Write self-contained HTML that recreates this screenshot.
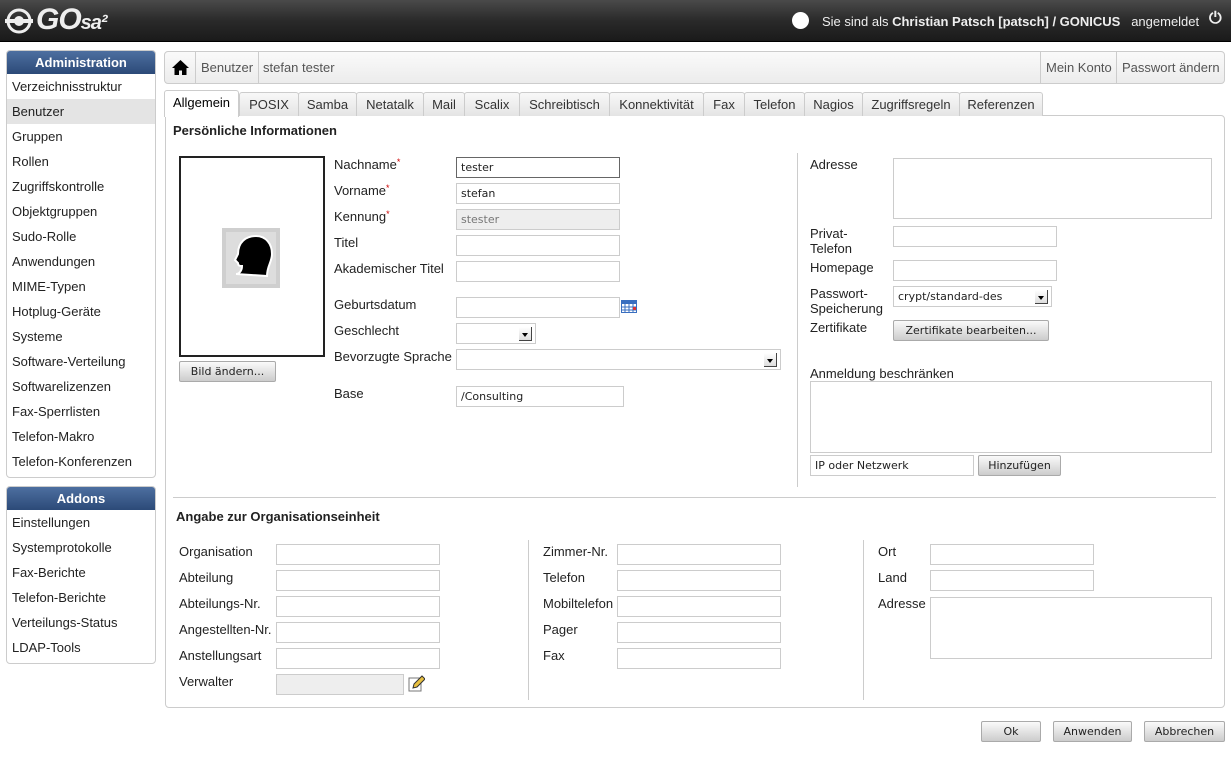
<!DOCTYPE html>
<html><head><meta charset="utf-8"><style>
*{box-sizing:border-box}
body{margin:0;width:1231px;height:765px;position:relative;font-family:"Liberation Sans",sans-serif;font-size:13px;color:#222;background:#fff;overflow:hidden}
.a{position:absolute}
.top{left:0;top:0;width:1231px;height:42px;background:linear-gradient(#4a4a4a,#2a2a2a 50%,#1a1a1a);border-bottom:1px solid #000}
.side{left:6px;width:150px;border:1px solid #ccc;border-radius:4px;background:#fff;overflow:hidden}
.side .h{height:23px;background:linear-gradient(#4d6fa0,#2c4a78);color:#fff;font-weight:bold;text-align:center;line-height:23px}
.side .i{height:25px;line-height:25px;padding-left:5px}
.in{position:absolute;height:21px;border:1px solid #ccc;background:#fff;font-family:"DejaVu Sans",sans-serif;font-size:11px;line-height:19px;padding-left:4px}
.btn{position:absolute;height:21px;border:1px solid #aaa;border-radius:2px;background:linear-gradient(#fafafa,#ccc);font-family:"DejaVu Sans",sans-serif;font-size:11px;text-align:center;line-height:19px}
.sel:after{content:"";position:absolute;right:3px;top:3px;width:12px;height:13px;background:linear-gradient(#fff,#ddd);border-right:1px solid #444;border-bottom:1px solid #444}
.sel:before{content:"";position:absolute;right:7px;top:9px;border:3px solid transparent;border-top:4px solid #000;z-index:2}
.tab{position:absolute;top:92px;height:24px;border:1px solid #ccc;border-bottom:none;border-radius:3px 3px 0 0;background:linear-gradient(#f8f8f8,#e4e4e4);text-align:center;line-height:24px;color:#333}
.l{position:absolute}
.r{color:#c00;font-size:9px;vertical-align:top}
</style></head><body>
<div class="a top">
 <svg class="a" style="left:4px;top:8px" width="30" height="26" viewBox="0 0 30 26"><circle cx="15" cy="13" r="11" fill="none" stroke="#eee" stroke-width="3"/><circle cx="15" cy="13" r="5" fill="#eee"/><rect x="1" y="11" width="28" height="4" fill="#eee"/></svg>
 <div class="a" style="left:36px;top:3px;color:#eee;font-weight:bold;font-style:italic;font-size:30px;letter-spacing:-1px">GO<span style="font-size:20px">sa²</span></div>
 <div class="a" style="left:792px;top:12px;width:17px;height:17px;border-radius:50%;background:#fff"></div>
 <div class="a" style="left:822px;top:14px;color:#eee;font-size:13px">Sie sind als <b>Christian Patsch [patsch] / GONICUS</b> &nbsp; angemeldet</div>
 <div class="a" style="left:1209px;top:10px;color:#eee;font-weight:bold;font-size:16px">⏻</div>
</div>
<div class="a side" style="top:50px;height:428px">
 <div class="h">Administration</div>
 <div class="i">Verzeichnisstruktur</div><div class="i" style="background:#e4e4e4">Benutzer</div><div class="i">Gruppen</div><div class="i">Rollen</div><div class="i">Zugriffskontrolle</div><div class="i">Objektgruppen</div><div class="i">Sudo-Rolle</div><div class="i">Anwendungen</div><div class="i">MIME-Typen</div><div class="i">Hotplug-Geräte</div><div class="i">Systeme</div><div class="i">Software-Verteilung</div><div class="i">Softwarelizenzen</div><div class="i">Fax-Sperrlisten</div><div class="i">Telefon-Makro</div><div class="i">Telefon-Konferenzen</div>
</div>
<div class="a side" style="top:486px;height:178px">
 <div class="h">Addons</div>
 <div class="i">Einstellungen</div><div class="i">Systemprotokolle</div><div class="i">Fax-Berichte</div><div class="i">Telefon-Berichte</div><div class="i">Verteilungs-Status</div><div class="i">LDAP-Tools</div>
</div>
<div class="a" style="left:164px;top:51px;width:1061px;height:33px;border:1px solid #ccc;border-radius:4px;background:linear-gradient(#fafafa,#ececec);color:#555;line-height:31px">
 <svg class="a" style="left:7px;top:8px" width="17" height="15" viewBox="0 0 17 15"><path d="M8.5 0L0 8h2.5v7h4.5v-4.5h3V15h4.5V8H17z" fill="#000"/></svg>
 <div class="a" style="left:30px;top:0;height:31px;border-left:1px solid #ccc;padding-left:5px">Benutzer</div>
 <div class="a" style="left:93px;top:0;height:31px;border-left:1px solid #ccc;padding-left:4px">stefan tester</div>
 <div class="a" style="left:875px;top:0;height:31px;border-left:1px solid #ccc;padding-left:5px">Mein Konto</div>
 <div class="a" style="left:951px;top:0;height:31px;border-left:1px solid #ccc;padding-left:5px">Passwort ändern</div>
</div>
<div class="a" style="left:165px;top:115px;width:1060px;height:593px;border:1px solid #ccc;border-radius:0 4px 4px 4px"></div>
<div class="tab" style="left:239px;width:60px">POSIX</div><div class="tab" style="left:298px;width:59px">Samba</div><div class="tab" style="left:356px;width:68px">Netatalk</div><div class="tab" style="left:423px;width:42px">Mail</div><div class="tab" style="left:464px;width:56px">Scalix</div><div class="tab" style="left:519px;width:91px">Schreibtisch</div><div class="tab" style="left:609px;width:95px">Konnektivität</div><div class="tab" style="left:703px;width:42px">Fax</div><div class="tab" style="left:744px;width:61px">Telefon</div><div class="tab" style="left:804px;width:59px">Nagios</div><div class="tab" style="left:862px;width:98px">Zugriffsregeln</div><div class="tab" style="left:959px;width:84px">Referenzen</div>
<div class="tab" style="left:164px;top:90px;width:75px;height:27px;background:#fff;color:#000">Allgemein</div>
<div class="l" style="left:173px;top:123px;font-weight:bold">Persönliche Informationen</div>
<div class="a" style="left:179px;top:156px;width:146px;height:201px;border:2px solid #222"></div>
<svg class="a" style="left:220px;top:226px" width="62" height="64" viewBox="0 0 62 64"><rect x="2" y="2" width="58" height="60" fill="#bbb" opacity=".7"/><rect x="6" y="6" width="50" height="52" fill="#ddd"/><path d="M16 48c3 0 6-3 6-8-2 0-4 0-4-3l-3-3 3-6c0-12 8-18 18-18 10 0 16 8 16 18 0 8-5 12-5 22z" fill="#000" stroke="#fff" stroke-width="2"/></svg>
<div class="btn" style="left:179px;top:361px;width:97px">Bild ändern...</div>
<div class="l" style="left:334px;top:157px">Nachname<span class="r">*</span></div>
<div class="l" style="left:334px;top:183px">Vorname<span class="r">*</span></div>
<div class="l" style="left:334px;top:209px">Kennung<span class="r">*</span></div>
<div class="l" style="left:334px;top:235px">Titel</div>
<div class="l" style="left:334px;top:261px">Akademischer Titel</div>
<div class="l" style="left:334px;top:297px">Geburtsdatum</div>
<div class="l" style="left:334px;top:323px">Geschlecht</div>
<div class="l" style="left:334px;top:349px">Bevorzugte Sprache</div>
<div class="l" style="left:334px;top:386px">Base</div>
<div class="in" style="left:456px;top:157px;width:164px;border-color:#666">tester</div>
<div class="in" style="left:456px;top:183px;width:164px">stefan</div>
<div class="in" style="left:456px;top:209px;width:164px;background:#eee;color:#777">stester</div>
<div class="in" style="left:456px;top:235px;width:164px"></div>
<div class="in" style="left:456px;top:261px;width:164px"></div>
<div class="in" style="left:456px;top:297px;width:164px"></div>
<svg class="a" style="left:621px;top:300px" width="16" height="13"><rect x=".5" y=".5" width="15" height="12" fill="#fff" stroke="#3a6fc0"/><rect x="1" y="1" width="14" height="3" fill="#3a6fc0"/><path d="M1 7h14M1 10h14M4 4v9M8 4v9M12 4v9" stroke="#3a6fc0"/><rect x="12" y="7" width="3" height="3" fill="#d33"/></svg>
<div class="in sel" style="left:456px;top:323px;width:80px"></div>
<div class="in sel" style="left:456px;top:349px;width:325px"></div>
<div class="in" style="left:456px;top:386px;width:168px">/Consulting</div>
<div class="a" style="left:797px;top:153px;width:1px;height:334px;background:#ccc"></div>
<div class="l" style="left:810px;top:157px">Adresse</div>
<div class="in" style="left:893px;top:158px;width:319px;height:61px"></div>
<div class="l" style="left:810px;top:226px;line-height:15px">Privat-<br>Telefon</div>
<div class="in" style="left:893px;top:226px;width:164px"></div>
<div class="l" style="left:810px;top:260px">Homepage</div>
<div class="in" style="left:893px;top:260px;width:164px"></div>
<div class="l" style="left:810px;top:286px;line-height:15px">Passwort-<br>Speicherung</div>
<div class="in sel" style="left:893px;top:286px;width:159px">crypt/standard-des</div>
<div class="l" style="left:810px;top:320px">Zertifikate</div>
<div class="btn" style="left:893px;top:320px;width:156px">Zertifikate bearbeiten...</div>
<div class="l" style="left:810px;top:366px">Anmeldung beschränken</div>
<div class="in" style="left:810px;top:381px;width:402px;height:72px"></div>
<div class="in" style="left:810px;top:455px;width:164px">IP oder Netzwerk</div>
<div class="btn" style="left:978px;top:455px;width:83px">Hinzufügen</div>
<div class="a" style="left:173px;top:497px;width:1043px;height:1px;background:#ccc"></div>
<div class="l" style="left:176px;top:509px;font-weight:bold">Angabe zur Organisationseinheit</div>
<div class="l" style="left:179px;top:544px">Organisation</div><div class="l" style="left:179px;top:570px">Abteilung</div><div class="l" style="left:179px;top:596px">Abteilungs-Nr.</div><div class="l" style="left:179px;top:622px">Angestellten-Nr.</div><div class="l" style="left:179px;top:648px">Anstellungsart</div><div class="l" style="left:179px;top:674px">Verwalter</div>
<div class="in" style="left:276px;top:544px;width:164px"></div><div class="in" style="left:276px;top:570px;width:164px"></div><div class="in" style="left:276px;top:596px;width:164px"></div><div class="in" style="left:276px;top:622px;width:164px"></div><div class="in" style="left:276px;top:648px;width:164px"></div><div class="in" style="left:276px;top:674px;width:128px;background:#eee"></div>
<svg class="a" style="left:408px;top:675px" width="17" height="17"><rect x="1" y="3" width="12" height="13" fill="#fff" stroke="#777"/><path d="M5 13l1-4 8-8 3 3-8 8z" fill="#e8c040" stroke="#333"/></svg>
<div class="a" style="left:528px;top:540px;width:1px;height:160px;background:#ccc"></div>
<div class="l" style="left:543px;top:544px">Zimmer-Nr.</div><div class="l" style="left:543px;top:570px">Telefon</div><div class="l" style="left:543px;top:596px">Mobiltelefon</div><div class="l" style="left:543px;top:622px">Pager</div><div class="l" style="left:543px;top:648px">Fax</div>
<div class="in" style="left:617px;top:544px;width:164px"></div><div class="in" style="left:617px;top:570px;width:164px"></div><div class="in" style="left:617px;top:596px;width:164px"></div><div class="in" style="left:617px;top:622px;width:164px"></div><div class="in" style="left:617px;top:648px;width:164px"></div>
<div class="a" style="left:863px;top:540px;width:1px;height:160px;background:#ccc"></div>
<div class="l" style="left:878px;top:544px">Ort</div><div class="l" style="left:878px;top:570px">Land</div><div class="l" style="left:878px;top:596px">Adresse</div>
<div class="in" style="left:930px;top:544px;width:164px"></div><div class="in" style="left:930px;top:570px;width:164px"></div><div class="in" style="left:930px;top:597px;width:282px;height:62px"></div>
<div class="btn" style="left:981px;top:721px;width:60px">Ok</div>
<div class="btn" style="left:1053px;top:721px;width:79px">Anwenden</div>
<div class="btn" style="left:1144px;top:721px;width:81px">Abbrechen</div>
</body></html>
